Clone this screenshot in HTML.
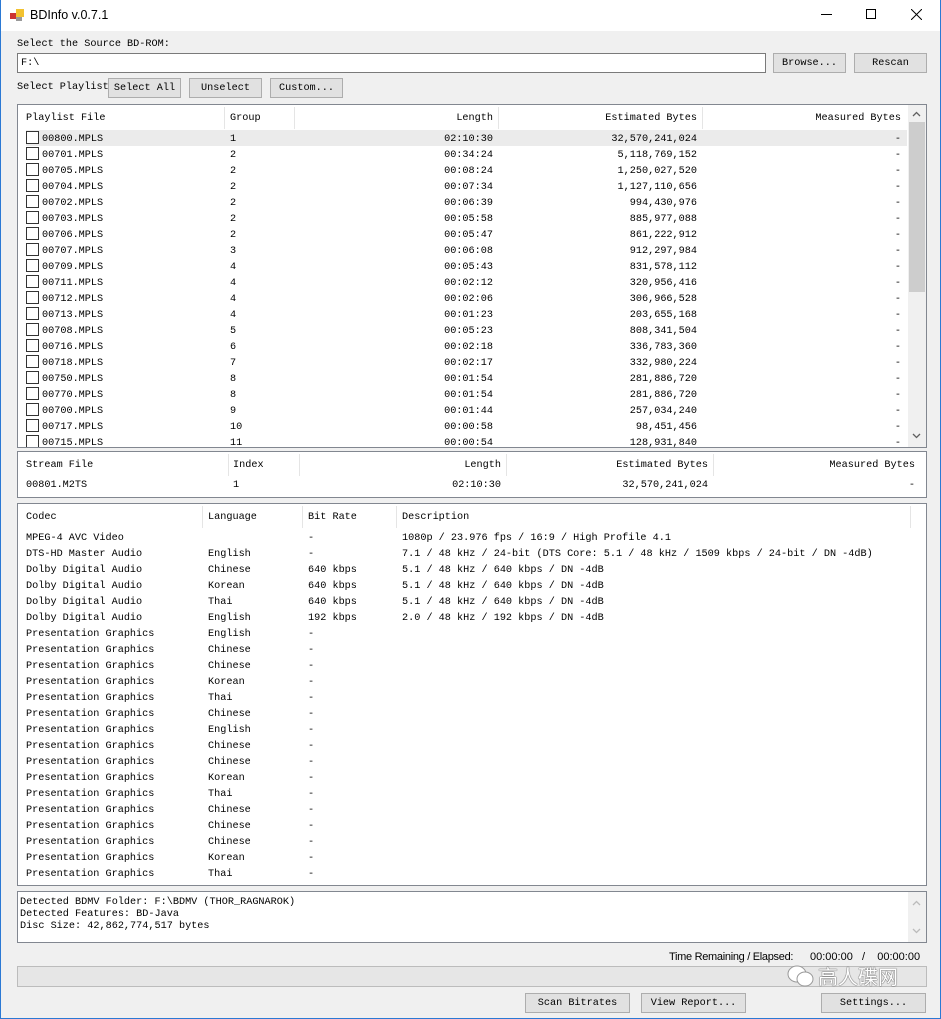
<!DOCTYPE html>
<html><head><meta charset="utf-8"><style>
*{margin:0;padding:0;box-sizing:border-box}
body{width:941px;height:1019px;background:#f0f0f0;position:relative;overflow:hidden;font-family:"Liberation Mono","Noto Sans CJK SC",monospace;font-size:10.2px;color:#000}
.a{position:absolute;white-space:pre}
.win{position:absolute;left:0;top:0;width:941px;height:1019px;border:1px solid #2b79d4;border-top:none}
.title{position:absolute;left:0;top:0;width:941px;height:31px;background:#fff}
.btn{position:absolute;height:20px;background:#e1e1e1;border:1px solid #adadad;text-align:center;line-height:19px}
.box{position:absolute;background:#fff;border:1px solid #828790;overflow:hidden}
.hd{position:absolute;top:1px;height:25px;line-height:25px}
.sep{position:absolute;top:2px;height:22px;width:1px;background:#e5e5e5}
.r{position:absolute;height:16px;line-height:16px;white-space:pre}
.cb{position:absolute;width:13px;height:13px;border:1px solid #333;background:#fff}
.sb{position:absolute;background:#f0f0f0}
</style></head><body>
<div class="title">
<svg class="a" style="left:10px;top:9px" width="14" height="12"><rect x="0" y="4" width="6" height="6" fill="#c33"/><rect x="6" y="0" width="8" height="8" fill="#f2c230"/><rect x="6" y="8" width="6" height="4" fill="#999"/></svg>
<div class="a" style="left:30px;top:8px;font-family:'Liberation Sans',sans-serif;font-size:12.5px">BDInfo v.0.7.1</div>
<div class="a" style="left:821px;top:14px;width:11px;height:1px;background:#000"></div>
<div class="a" style="left:866px;top:9px;width:10px;height:10px;border:1px solid #000"></div>
<svg class="a" style="left:911px;top:9px" width="11" height="11"><path d="M0 0L11 11M11 0L0 11" stroke="#000"/></svg>
</div>
<div class="win"></div>

<div class="a" style="left:17px;top:39px">Select the Source BD-ROM:</div>
<div class="a" style="left:17px;top:53px;width:749px;height:20px;background:#fff;border:1px solid #7a7a7a;line-height:19px;padding-left:3px">F:\</div>
<div class="btn" style="left:773px;top:53px;width:73px">Browse...</div>
<div class="btn" style="left:854px;top:53px;width:73px">Rescan</div>
<div class="a" style="left:17px;top:82px">Select Playlist</div>
<div class="btn" style="left:108px;top:78px;width:73px">Select All</div>
<div class="btn" style="left:189px;top:78px;width:73px">Unselect</div>
<div class="btn" style="left:270px;top:78px;width:73px">Custom...</div>

<div class="box" style="left:17px;top:104px;width:910px;height:344px">
<div class="hd" style="left:8px">Playlist File</div><div class="sep" style="left:206px"></div>
<div class="hd" style="left:212px">Group</div><div class="sep" style="left:276px"></div>
<div class="hd" style="left:280px;width:195px;text-align:right">Length</div><div class="sep" style="left:480px"></div>
<div class="hd" style="left:484px;width:195px;text-align:right">Estimated Bytes</div><div class="sep" style="left:684px"></div>
<div class="hd" style="left:688px;width:195px;text-align:right">Measured Bytes</div>
<div class="r" style="left:8px;top:25px;width:881px;background:#ebebeb"></div>
<div id="pl"></div>
<div class="sb" style="left:890px;top:0;width:18px;height:342px"></div>
<div class="a" style="left:891px;top:17px;width:16px;height:170px;background:#cdcdcd"></div>
<svg class="a" style="left:894px;top:6px" width="9" height="6"><path d="M1 5L4.5 1.5L8 5" stroke="#606060" fill="none" stroke-width="1.3"/></svg>
<svg class="a" style="left:894px;top:328px" width="9" height="6"><path d="M1 1L4.5 4.5L8 1" stroke="#606060" fill="none" stroke-width="1.3"/></svg>
</div>

<div class="box" style="left:17px;top:451px;width:910px;height:47px">
<div class="hd" style="left:8px">Stream File</div><div class="sep" style="left:210px"></div>
<div class="hd" style="left:215px">Index</div><div class="sep" style="left:281px"></div>
<div class="hd" style="left:285px;width:198px;text-align:right">Length</div><div class="sep" style="left:488px"></div>
<div class="hd" style="left:492px;width:198px;text-align:right">Estimated Bytes</div><div class="sep" style="left:695px"></div>
<div class="hd" style="left:699px;width:198px;text-align:right">Measured Bytes</div>
<div class="r" style="left:8px;top:26px">00801.M2TS</div>
<div class="r" style="left:215px;top:26px">1</div>
<div class="r" style="left:285px;top:26px;width:198px;text-align:right">02:10:30</div>
<div class="r" style="left:492px;top:26px;width:198px;text-align:right">32,570,241,024</div>
<div class="r" style="left:699px;top:26px;width:198px;text-align:right">-</div>
</div>

<div class="box" style="left:17px;top:503px;width:910px;height:383px">
<div class="hd" style="left:8px">Codec</div><div class="sep" style="left:184px"></div>
<div class="hd" style="left:190px">Language</div><div class="sep" style="left:284px"></div>
<div class="hd" style="left:290px">Bit Rate</div><div class="sep" style="left:378px"></div>
<div class="hd" style="left:384px">Description</div><div class="sep" style="left:892px"></div>
<div id="cd"></div>
</div>

<div class="box" style="left:17px;top:891px;width:910px;height:52px;line-height:12px;padding:3px 0 0 2px"><div style="position:relative;top:2px">Detected BDMV Folder: F:\BDMV (THOR_RAGNAROK)<br>Detected Features: BD-Java<br>Disc Size: 42,862,774,517 bytes</div>
<div class="sb" style="left:890px;top:0;width:18px;height:50px"></div>
<svg class="a" style="left:894px;top:8px" width="9" height="6"><path d="M1 5L4.5 1.5L8 5" stroke="#bbb" fill="none" stroke-width="1.3"/></svg>
<svg class="a" style="left:894px;top:36px" width="9" height="6"><path d="M1 1L4.5 4.5L8 1" stroke="#bbb" fill="none" stroke-width="1.3"/></svg>
</div>

<div class="a" style="left:669px;top:951px;font-family:'Liberation Sans',sans-serif;font-size:11px;letter-spacing:-0.3px">Time Remaining / Elapsed:</div>
<div class="a" style="left:810px;top:951px;font-family:'Liberation Sans',sans-serif;font-size:11px">00:00:00&nbsp;&nbsp;&nbsp;/&nbsp;&nbsp;&nbsp;&nbsp;00:00:00</div>
<div class="a" style="left:17px;top:966px;width:910px;height:21px;background:#e6e6e6;border:1px solid #bcbcbc"></div>
<svg class="a" style="left:786px;top:963px" width="30" height="26"><ellipse cx="11" cy="11" rx="9" ry="8" fill="#fff" stroke="#999"/><ellipse cx="19" cy="16" rx="8" ry="7" fill="#fff" stroke="#999"/></svg>
<div class="a" style="left:818px;top:961px;font-family:'Noto Sans CJK SC',sans-serif;font-size:20px;color:#fff;text-shadow:0 0 1px #444,0 0 1px #444">高人碟网</div>
<div class="btn" style="left:525px;top:993px;width:105px">Scan Bitrates</div>
<div class="btn" style="left:641px;top:993px;width:105px">View Report...</div>
<div class="btn" style="left:821px;top:993px;width:105px">Settings...</div>

<script>
var p=[["00800",1,"02:10:30","32,570,241,024"],["00701",2,"00:34:24","5,118,769,152"],["00705",2,"00:08:24","1,250,027,520"],["00704",2,"00:07:34","1,127,110,656"],["00702",2,"00:06:39","994,430,976"],["00703",2,"00:05:58","885,977,088"],["00706",2,"00:05:47","861,222,912"],["00707",3,"00:06:08","912,297,984"],["00709",4,"00:05:43","831,578,112"],["00711",4,"00:02:12","320,956,416"],["00712",4,"00:02:06","306,966,528"],["00713",4,"00:01:23","203,655,168"],["00708",5,"00:05:23","808,341,504"],["00716",6,"00:02:18","336,783,360"],["00718",7,"00:02:17","332,980,224"],["00750",8,"00:01:54","281,886,720"],["00770",8,"00:01:54","281,886,720"],["00700",9,"00:01:44","257,034,240"],["00717",10,"00:00:58","98,451,456"],["00715",11,"00:00:54","128,931,840"]];
var h="";p.forEach(function(r,i){var t=25+16*i,u=t+2;
h+='<div class="cb" style="left:8px;top:'+(t+1)+'px"></div><div class="r" style="left:24px;top:'+u+'px">'+r[0]+'.MPLS</div><div class="r" style="left:212px;top:'+u+'px">'+r[1]+'</div><div class="r" style="left:280px;top:'+u+'px;width:195px;text-align:right">'+r[2]+'</div><div class="r" style="left:484px;top:'+u+'px;width:195px;text-align:right">'+r[3]+'</div><div class="r" style="left:688px;top:'+u+'px;width:195px;text-align:right">-</div>';});
document.getElementById("pl").innerHTML=h;
var c=[["MPEG-4 AVC Video","","-","1080p / 23.976 fps / 16:9 / High Profile 4.1"],["DTS-HD Master Audio","English","-","7.1 / 48 kHz / 24-bit (DTS Core: 5.1 / 48 kHz / 1509 kbps / 24-bit / DN -4dB)"],["Dolby Digital Audio","Chinese","640 kbps","5.1 / 48 kHz / 640 kbps / DN -4dB"],["Dolby Digital Audio","Korean","640 kbps","5.1 / 48 kHz / 640 kbps / DN -4dB"],["Dolby Digital Audio","Thai","640 kbps","5.1 / 48 kHz / 640 kbps / DN -4dB"],["Dolby Digital Audio","English","192 kbps","2.0 / 48 kHz / 192 kbps / DN -4dB"]];
["English","Chinese","Chinese","Korean","Thai","Chinese","English","Chinese","Chinese","Korean","Thai","Chinese","Chinese","Chinese","Korean","Thai"].forEach(function(l){c.push(["Presentation Graphics",l,"-",""]);});
h="";c.forEach(function(r,i){var t=27+16*i;
h+='<div class="r" style="left:8px;top:'+t+'px">'+r[0]+'</div><div class="r" style="left:190px;top:'+t+'px">'+r[1]+'</div><div class="r" style="left:290px;top:'+t+'px">'+r[2]+'</div><div class="r" style="left:384px;top:'+t+'px">'+r[3]+'</div>';});
document.getElementById("cd").innerHTML=h;
</script>
</body></html>
